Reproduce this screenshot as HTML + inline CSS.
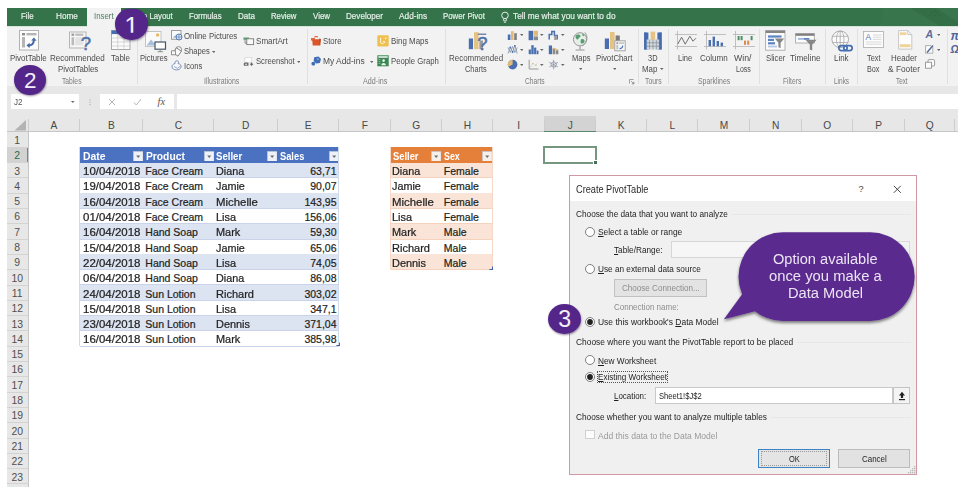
<!DOCTYPE html>
<html lang="en"><head><meta charset="utf-8"><title>Excel - Create PivotTable</title>
<style>
*{box-sizing:border-box;margin:0;padding:0}
html,body{width:962px;height:487px;overflow:hidden;background:#fff}
body{font-family:"Liberation Sans",sans-serif;color:#444;position:relative}
#app{position:absolute;left:0;top:0;width:962px;height:487px;overflow:hidden;background:#fff}
.a{position:absolute}
.t{position:absolute;white-space:pre;line-height:1;transform-origin:0 50%}
u{text-decoration:underline;text-underline-offset:1px;text-decoration-thickness:0.8px}

</style></head>
<body>
<div id="app">
<div class="a" style="left:7px;top:8px;width:951.00px;height:18.00px;background:#35734a;"></div>
<div class="a" style="left:7px;top:25.7px;width:951.00px;height:1.30px;background:#d5e4da;"></div>
<svg class="a" style="left:880px;top:8px" width="78" height="18" viewBox="0 0 78 18"><path d="M3 0h75v18H0z" fill="#3b774f" opacity=".55"/><path d="M30 0h26L78 14v4H60z" fill="#2e6842" opacity=".5"/></svg>
<div class="a" style="left:87px;top:8px;width:34.30px;height:19.00px;background:#f2f2f2;"></div>
<div class="t" style="left:20.60px;top:10.81px;font-size:9.8px;color:#e9f1eb;transform:scaleX(0.804);-webkit-text-stroke:0.200px #e9f1eb;">File</div>
<div class="t" style="left:55.80px;top:10.81px;font-size:9.8px;color:#e9f1eb;transform:scaleX(0.838);-webkit-text-stroke:0.200px #e9f1eb;">Home</div>
<div class="t" style="left:142.50px;top:10.81px;font-size:9.8px;color:#e9f1eb;transform:scaleX(0.790);-webkit-text-stroke:0.200px #e9f1eb;">e Layout</div>
<div class="t" style="left:188.70px;top:10.81px;font-size:9.8px;color:#e9f1eb;transform:scaleX(0.798);-webkit-text-stroke:0.200px #e9f1eb;">Formulas</div>
<div class="t" style="left:237.50px;top:10.81px;font-size:9.8px;color:#e9f1eb;transform:scaleX(0.821);-webkit-text-stroke:0.200px #e9f1eb;">Data</div>
<div class="t" style="left:270.80px;top:10.81px;font-size:9.8px;color:#e9f1eb;transform:scaleX(0.791);-webkit-text-stroke:0.200px #e9f1eb;">Review</div>
<div class="t" style="left:312.50px;top:10.81px;font-size:9.8px;color:#e9f1eb;transform:scaleX(0.807);-webkit-text-stroke:0.200px #e9f1eb;">View</div>
<div class="t" style="left:345.50px;top:10.81px;font-size:9.8px;color:#e9f1eb;transform:scaleX(0.826);-webkit-text-stroke:0.200px #e9f1eb;">Developer</div>
<div class="t" style="left:399.20px;top:10.81px;font-size:9.8px;color:#e9f1eb;transform:scaleX(0.846);-webkit-text-stroke:0.200px #e9f1eb;">Add-ins</div>
<div class="t" style="left:443.20px;top:10.81px;font-size:9.8px;color:#e9f1eb;transform:scaleX(0.800);-webkit-text-stroke:0.200px #e9f1eb;">Power Pivot</div>
<div class="t" style="left:512.50px;top:10.81px;font-size:9.8px;color:#e9f1eb;transform:scaleX(0.848);-webkit-text-stroke:0.200px #e9f1eb;">Tell me what you want to do</div>
<div class="t" style="left:93.60px;top:10.81px;font-size:9.8px;color:#4a7f5e;transform:scaleX(0.799);">Insert</div>
<svg class="a" style="left:499.2px;top:9.8px;" width="12" height="14" viewBox="0 0 12 14"><circle cx="6" cy="5.4" r="3.3" fill="none" stroke="#e4eee7" stroke-width="1"/><path d="M4.7 8.6v2.3h2.6V8.6M4.9 12.2h2.2" fill="none" stroke="#e4eee7" stroke-width="0.9"/></svg>
<svg class="a" style="left:928px;top:10px;" width="14" height="8" viewBox="0 0 14 8"><g fill="#2a5c3a"><circle cx="2" cy="5" r=".6"/><circle cx="4.5" cy="2.5" r=".6"/><circle cx="7" cy="5" r=".6"/><circle cx="9.5" cy="2.5" r=".6"/><circle cx="12" cy="5" r=".6"/><circle cx="7" cy="1" r=".6"/></g></svg>
<div class="a" style="left:7px;top:26.5px;width:951.00px;height:59.50px;background:#f2f2f2;"></div>
<div class="a" style="left:86.5px;top:24px;width:34.50px;height:4.00px;background:#f2f2f2;"></div>
<div class="a" style="left:7px;top:86px;width:951.00px;height:30.00px;background:#e7e7e7;"></div>
<div class="a" style="left:137px;top:29px;width:1.00px;height:55.00px;background:#e0e0e0;"></div>
<div class="a" style="left:307px;top:29px;width:1.00px;height:55.00px;background:#e0e0e0;"></div>
<div class="a" style="left:445px;top:29px;width:1.00px;height:55.00px;background:#e0e0e0;"></div>
<div class="a" style="left:637.5px;top:29px;width:1.00px;height:55.00px;background:#e0e0e0;"></div>
<div class="a" style="left:668px;top:29px;width:1.00px;height:55.00px;background:#e0e0e0;"></div>
<div class="a" style="left:758.8px;top:29px;width:1.00px;height:55.00px;background:#e0e0e0;"></div>
<div class="a" style="left:825px;top:29px;width:1.00px;height:55.00px;background:#e0e0e0;"></div>
<div class="a" style="left:857.3px;top:29px;width:1.00px;height:55.00px;background:#e0e0e0;"></div>
<div class="a" style="left:946.5px;top:29px;width:1.00px;height:55.00px;background:#e0e0e0;"></div>
<div class="t" style="left:62.00px;top:76.90px;font-size:8.6px;color:#7b7b7b;transform:scaleX(0.785);">Tables</div>
<div class="t" style="left:203.70px;top:76.90px;font-size:8.6px;color:#7b7b7b;transform:scaleX(0.812);">Illustrations</div>
<div class="t" style="left:363.20px;top:76.90px;font-size:8.6px;color:#7b7b7b;transform:scaleX(0.834);">Add-ins</div>
<div class="t" style="left:525.40px;top:76.90px;font-size:8.6px;color:#7b7b7b;transform:scaleX(0.774);">Charts</div>
<div class="t" style="left:645.00px;top:76.90px;font-size:8.6px;color:#7b7b7b;transform:scaleX(0.799);">Tours</div>
<div class="t" style="left:697.50px;top:76.90px;font-size:8.6px;color:#7b7b7b;transform:scaleX(0.802);">Sparklines</div>
<div class="t" style="left:783.00px;top:76.90px;font-size:8.6px;color:#7b7b7b;transform:scaleX(0.782);">Filters</div>
<div class="t" style="left:833.70px;top:76.90px;font-size:8.6px;color:#7b7b7b;transform:scaleX(0.753);">Links</div>
<div class="t" style="left:895.60px;top:76.90px;font-size:8.6px;color:#7b7b7b;transform:scaleX(0.736);">Text</div>
<div class="t" style="left:10.30px;top:52.96px;font-size:9.7px;color:#4c4c4c;transform:scaleX(0.821);">PivotTable</div>
<div class="t" style="left:50.30px;top:52.96px;font-size:9.7px;color:#4c4c4c;transform:scaleX(0.833);">Recommended</div>
<div class="t" style="left:58.00px;top:63.96px;font-size:9.7px;color:#4c4c4c;transform:scaleX(0.813);">PivotTables</div>
<div class="t" style="left:111.00px;top:52.96px;font-size:9.7px;color:#4c4c4c;transform:scaleX(0.820);">Table</div>
<div class="t" style="left:140.30px;top:52.96px;font-size:9.7px;color:#4c4c4c;transform:scaleX(0.791);">Pictures</div>
<div class="t" style="left:448.60px;top:52.96px;font-size:9.7px;color:#4c4c4c;transform:scaleX(0.823);">Recommended</div>
<div class="t" style="left:465.00px;top:63.76px;font-size:9.7px;color:#4c4c4c;transform:scaleX(0.760);">Charts</div>
<div class="t" style="left:571.50px;top:52.96px;font-size:9.7px;color:#4c4c4c;transform:scaleX(0.780);">Maps</div>
<div class="t" style="left:596.00px;top:52.96px;font-size:9.7px;color:#4c4c4c;transform:scaleX(0.807);">PivotChart</div>
<div class="t" style="left:648.00px;top:52.96px;font-size:9.7px;color:#4c4c4c;transform:scaleX(0.767);">3D</div>
<div class="t" style="left:642.40px;top:63.76px;font-size:9.7px;color:#4c4c4c;transform:scaleX(0.817);">Map</div>
<div class="t" style="left:677.80px;top:52.96px;font-size:9.7px;color:#4c4c4c;transform:scaleX(0.775);">Line</div>
<div class="t" style="left:700.00px;top:52.96px;font-size:9.7px;color:#4c4c4c;transform:scaleX(0.833);">Column</div>
<div class="t" style="left:734.00px;top:52.96px;font-size:9.7px;color:#4c4c4c;transform:scaleX(0.903);">Win/</div>
<div class="t" style="left:735.70px;top:63.76px;font-size:9.7px;color:#4c4c4c;transform:scaleX(0.723);">Loss</div>
<div class="t" style="left:765.70px;top:52.96px;font-size:9.7px;color:#4c4c4c;transform:scaleX(0.796);">Slicer</div>
<div class="t" style="left:790.40px;top:52.96px;font-size:9.7px;color:#4c4c4c;transform:scaleX(0.844);">Timeline</div>
<div class="t" style="left:834.00px;top:52.96px;font-size:9.7px;color:#4c4c4c;transform:scaleX(0.815);">Link</div>
<div class="t" style="left:866.50px;top:52.96px;font-size:9.7px;color:#4c4c4c;transform:scaleX(0.760);">Text</div>
<div class="t" style="left:866.50px;top:63.76px;font-size:9.7px;color:#4c4c4c;transform:scaleX(0.748);">Box</div>
<div class="t" style="left:891.00px;top:52.96px;font-size:9.7px;color:#4c4c4c;transform:scaleX(0.818);">Header</div>
<div class="t" style="left:888.00px;top:63.76px;font-size:9.7px;color:#4c4c4c;transform:scaleX(0.861);">&amp; Footer</div>
<div class="t" style="left:183.70px;top:30.76px;font-size:9.7px;color:#4c4c4c;transform:scaleX(0.811);">Online Pictures</div>
<div class="t" style="left:183.70px;top:45.96px;font-size:9.7px;color:#4c4c4c;transform:scaleX(0.782);">Shapes</div>
<div class="t" style="left:183.70px;top:61.16px;font-size:9.7px;color:#4c4c4c;transform:scaleX(0.790);">Icons</div>
<div class="t" style="left:255.70px;top:35.66px;font-size:9.7px;color:#4c4c4c;transform:scaleX(0.832);">SmartArt</div>
<div class="t" style="left:255.70px;top:56.46px;font-size:9.7px;color:#4c4c4c;transform:scaleX(0.790);">Screenshot</div>
<div class="t" style="left:323.00px;top:35.96px;font-size:9.7px;color:#4c4c4c;transform:scaleX(0.799);">Store</div>
<div class="t" style="left:323.00px;top:56.46px;font-size:9.7px;color:#4c4c4c;transform:scaleX(0.868);">My Add-ins</div>
<div class="t" style="left:390.50px;top:35.96px;font-size:9.7px;color:#4c4c4c;transform:scaleX(0.819);">Bing Maps</div>
<div class="t" style="left:390.50px;top:56.46px;font-size:9.7px;color:#4c4c4c;transform:scaleX(0.800);">People Graph</div>
<svg class="a" style="left:211.80px;top:50.50px" width="3.6" height="2" viewBox="0 0 3.6 2"><path d="M0 0H3.6L1.8 2Z" fill="#666"/></svg>
<svg class="a" style="left:296.80px;top:61.00px" width="3.6" height="2" viewBox="0 0 3.6 2"><path d="M0 0H3.6L1.8 2Z" fill="#666"/></svg>
<svg class="a" style="left:369.80px;top:61.00px" width="3.6" height="2" viewBox="0 0 3.6 2"><path d="M0 0H3.6L1.8 2Z" fill="#666"/></svg>
<svg class="a" style="left:578.90px;top:68.00px" width="3.6" height="2" viewBox="0 0 3.6 2"><path d="M0 0H3.6L1.8 2Z" fill="#666"/></svg>
<svg class="a" style="left:612.60px;top:68.00px" width="3.6" height="2" viewBox="0 0 3.6 2"><path d="M0 0H3.6L1.8 2Z" fill="#666"/></svg>
<svg class="a" style="left:660.20px;top:68.30px" width="3.6" height="2" viewBox="0 0 3.6 2"><path d="M0 0H3.6L1.8 2Z" fill="#666"/></svg>
<svg class="a" style="left:519.70px;top:34.00px" width="3.6" height="2" viewBox="0 0 3.6 2"><path d="M0 0H3.6L1.8 2Z" fill="#666"/></svg>
<svg class="a" style="left:540.20px;top:34.00px" width="3.6" height="2" viewBox="0 0 3.6 2"><path d="M0 0H3.6L1.8 2Z" fill="#666"/></svg>
<svg class="a" style="left:561.20px;top:34.00px" width="3.6" height="2" viewBox="0 0 3.6 2"><path d="M0 0H3.6L1.8 2Z" fill="#666"/></svg>
<svg class="a" style="left:519.70px;top:48.50px" width="3.6" height="2" viewBox="0 0 3.6 2"><path d="M0 0H3.6L1.8 2Z" fill="#666"/></svg>
<svg class="a" style="left:540.20px;top:48.50px" width="3.6" height="2" viewBox="0 0 3.6 2"><path d="M0 0H3.6L1.8 2Z" fill="#666"/></svg>
<svg class="a" style="left:561.20px;top:48.50px" width="3.6" height="2" viewBox="0 0 3.6 2"><path d="M0 0H3.6L1.8 2Z" fill="#666"/></svg>
<svg class="a" style="left:519.70px;top:63.50px" width="3.6" height="2" viewBox="0 0 3.6 2"><path d="M0 0H3.6L1.8 2Z" fill="#666"/></svg>
<svg class="a" style="left:540.20px;top:63.50px" width="3.6" height="2" viewBox="0 0 3.6 2"><path d="M0 0H3.6L1.8 2Z" fill="#666"/></svg>
<svg class="a" style="left:561.20px;top:63.50px" width="3.6" height="2" viewBox="0 0 3.6 2"><path d="M0 0H3.6L1.8 2Z" fill="#666"/></svg>
<svg class="a" style="left:936.60px;top:33.50px" width="3.6" height="2" viewBox="0 0 3.6 2"><path d="M0 0H3.6L1.8 2Z" fill="#666"/></svg>
<svg class="a" style="left:936.60px;top:48.50px" width="3.6" height="2" viewBox="0 0 3.6 2"><path d="M0 0H3.6L1.8 2Z" fill="#666"/></svg>
<svg class="a" style="left:19px;top:30px;" width="21" height="21" viewBox="0 0 21 21"><rect x=".5" y=".5" width="19" height="19.500" fill="#fcfcfc" stroke="#b2b2b2"/><rect x="3" y="3" width="3" height="2.4" fill="#8d8d8d"/><rect x="7.5" y="3" width="10" height="2.4" fill="#b5b5b5"/><rect x="3" y="7" width="3" height="10.5" fill="#b5b5b5"/><path d="M9.5 15.5c3.5 0 5.2-1.8 5.4-5.5" fill="none" stroke="#456aa9" stroke-width="2"/><path d="M12.2 10.6l2.8-3 2.6 3.2zM10.6 12.7l-3.2 2.8 3.3 2.6z" fill="#456aa9"/></svg>
<svg class="a" style="left:69px;top:31px;" width="22" height="22" viewBox="0 0 22 22"><rect x=".5" y="1" width="16.500" height="16" fill="#f6f6f6" stroke="#b5b5b5"/><rect x="2.5" y="2.6" width="2.6" height="2.2" fill="#999"/><rect x="6.3" y="2.6" width="8" height="2.2" fill="#bbb"/><rect x="2.5" y="6.2" width="2.6" height="8" fill="#bbb"/><rect x="6.3" y="6.2" width="8" height="8" fill="#e3e3e3"/></svg>
<div class="t" style="left:80.80px;top:35.26px;font-size:18.5px;color:#5172a8;-webkit-text-stroke:0.500px #5172a8;">?</div>
<svg class="a" style="left:110.5px;top:30px;" width="20" height="21" viewBox="0 0 20 21"><rect x=".5" y=".5" width="18.5" height="19" fill="#fbfbfb" stroke="#a8a8a8"/><rect x=".5" y=".5" width="18.5" height="3.6" fill="#4a6fb0"/><path d="M.5 8h18.5M.5 12h18.5M.5 16h18.5M6.7 4v15.5M12.9 4v15.5" stroke="#c9c9c9" stroke-width=".7" fill="none"/></svg>
<svg class="a" style="left:145px;top:30.5px;" width="22" height="22" viewBox="0 0 22 22"><rect x=".5" y=".5" width="15.5" height="15" fill="#fafafa" stroke="#c4c4c4"/><path d="M1.5 14.5l4.5-6 3.4 4 2-2 3.6 4z" fill="#a9bfdc"/><circle cx="12.6" cy="4" r="1.7" fill="#eab765"/><rect x="10" y="11" width="10.5" height="7.2" fill="#fdfdfd" stroke="#46556b" stroke-width="1.2"/><path d="M15.2 18.4v2M12.6 20.7h5.3" stroke="#8b8b8b" stroke-width="1"/></svg>
<svg class="a" style="left:171px;top:29.5px;" width="12" height="11" viewBox="0 0 12 11"><rect x=".5" y=".5" width="9.5" height="8.8" fill="#fafafa" stroke="#9b9b9b"/><path d="M1.5 8.5l2.7-3.6 2 2.4z" fill="#a9bfdc"/><circle cx="8" cy="7" r="3" fill="#dfe8f3" stroke="#4a73b4" stroke-width=".9"/><path d="M5 7h6M8 4v6" stroke="#4a73b4" stroke-width=".6"/></svg>
<svg class="a" style="left:171px;top:46px;" width="12" height="11" viewBox="0 0 12 11"><circle cx="7.6" cy="3.6" r="3" fill="#f7f7f7" stroke="#7e7e7e" stroke-width=".9"/><rect x="3.2" y="3" width="6" height="6" transform="rotate(35 6.2 6)" fill="#f9f9f9" stroke="#7e7e7e" stroke-width=".9"/><rect x=".6" y="4.8" width="4" height="4" fill="#f7f7f7" stroke="#7e7e7e" stroke-width=".8"/></svg>
<svg class="a" style="left:171px;top:60px;" width="12" height="11" viewBox="0 0 12 11"><path d="M4.200 3.400c-.8-1.600.6-2.900 2-2.600 1.500.3 1.800 1.900.9 2.800 1.900.2 3.200 1.500 3 3.200-.3 2.200-2.600 3.200-4.800 3.100-2.300-.1-4.200-1.200-4.300-3.100-.1-1.500 1.100-2.800 3.200-3.400z" fill="#f6f8fb" stroke="#7187ad" stroke-width=".9"/><path d="M3 6.500l3.600 1.800 3-2.400" fill="none" stroke="#7187ad" stroke-width=".7"/></svg>
<svg class="a" style="left:243px;top:36px;" width="12" height="10" viewBox="0 0 12 10"><path d="M.5 1.500h5.500v2.300H.500z" fill="#5b9a6c"/><path d="M2 3.800v3.400h2" stroke="#777" stroke-width=".8" fill="none"/><rect x="3.800" y="2.800" width="6.800" height="5.800" fill="#fafafa" stroke="#7b7b7b" stroke-width=".9"/></svg>
<svg class="a" style="left:243px;top:56.5px;" width="12" height="10" viewBox="0 0 12 10"><rect x="1.800" y=".5" width="7" height="5" fill="#fbfbfb" stroke="#d3d3d3" stroke-width=".7"/><path d="M.8 8.800V6.300l1-.9h2.700l1 .9v2.500z" fill="#6c6c6c"/><circle cx="3.100" cy="7.300" r=".9" fill="#ddd"/><path d="M7 7.200h3.200M8.600 5.600v3.200" stroke="#5a5a5a" stroke-width="1"/></svg>
<svg class="a" style="left:311px;top:36px;" width="10.5" height="10.5" viewBox="0 0 10.5 10.5"><path d="M1.200 3.200h7.800l-.5 6.300H1.700z" fill="#d9572b"/><path d="M.3 2.600h3.400l-.3 1.600H.5zM3.200 1.200c.8-1.400 3-1.400 3.800 0" fill="#e2703f" stroke="#d9572b" stroke-width=".9"/><path d="M8.200 2.500l1.800.6-.7 6.400-1.200-.2z" fill="#c24a22"/></svg>
<svg class="a" style="left:311px;top:56.2px;" width="10.5" height="10" viewBox="0 0 10.5 10"><path d="M3.200 1.200l4.300-.7 2.500 2.500-1.200 4-3.800.6-2.300-2.500z" fill="#3f6cb4"/><circle cx="2.300" cy="7.700" r="1.900" fill="#3f6cb4"/><circle cx="6.800" cy="3.200" r="1.100" fill="#7d9fd4"/></svg>
<svg class="a" style="left:377px;top:34.5px;" width="12" height="12" viewBox="0 0 12 12"><rect x=".3" y=".3" width="11.400" height="11.200" rx="1.200" fill="#efc050"/><path d="M3.600 2.800v5l1.700 1 2.800-1.700-2-.9" fill="none" stroke="#fff7df" stroke-width="1"/><circle cx="8.600" cy="3.400" r=".8" fill="#fff7df"/></svg>
<svg class="a" style="left:377px;top:55.3px;" width="12" height="11.6" viewBox="0 0 12 11.6"><rect x=".3" y=".3" width="11.400" height="11" fill="#3b8654"/><rect x="1.300" y="1.200" width="9.400" height="1.600" fill="#e6f1e9"/><circle cx="6.600" cy="5.600" r="1.300" fill="#eef6f0"/><path d="M4.300 10.300c0-3.200 4.600-3.200 4.600 0z" fill="#eef6f0"/><path d="M1.600 4.500h1.700M1.600 6.500h1.700M1.600 8.500h1.700" stroke="#9cc7aa" stroke-width=".8"/></svg>
<svg class="a" style="left:467.5px;top:30.5px;" width="21" height="21" viewBox="0 0 21 21"><rect x=".8" y="7.500" width="4.200" height="10.700" fill="#4a6fb0"/><rect x="6" y="1.200" width="4.600" height="17" fill="#e4c384"/><rect x="11.400" y="9.500" width="3.600" height="8.700" fill="#9a9a9a"/><path d="M9.800 3.200h8.400" stroke="#5a6f94" stroke-width="1.200"/></svg>
<div class="t" style="left:477.30px;top:35.06px;font-size:18.5px;color:#5172a8;-webkit-text-stroke:0.500px #5172a8;">?</div>
<svg class="a" style="left:507px;top:29.5px;" width="11.5" height="11" viewBox="0 0 11.5 11"><rect x=".8" y="4.500" width="2.600" height="5.500" fill="#4a6fb0"/><rect x="4" y="1.200" width="2.600" height="8.800" fill="#e0bb78"/><rect x="7.200" y="3.200" width="2.600" height="6.800" fill="#7f7f7f"/></svg>
<svg class="a" style="left:528px;top:29.5px;" width="11.5" height="11" viewBox="0 0 11.5 11"><rect x=".6" y=".8" width="4.600" height="9.400" fill="#4a6fb0"/><rect x="5.800" y=".8" width="4.200" height="5" fill="#e0bb78"/><rect x="5.800" y="6.400" width="4.200" height="3.800" fill="#8b8b8b"/></svg>
<svg class="a" style="left:548px;top:29.5px;" width="11.5" height="11" viewBox="0 0 11.5 11"><path d="M1.200 9.500V4.500h2.600V1.500h2.600v4h2.800v4" fill="none" stroke="#4a6fb0" stroke-width="1.500"/><rect x="6.200" y="5.500" width="2.400" height="4.500" fill="#9a9a9a"/></svg>
<svg class="a" style="left:507px;top:44px;" width="11.5" height="11" viewBox="0 0 11.5 11"><path d="M1 9.500l2.300-6 2.300 4.500 2.300-6.500 2.300 8M1 3.500l2.300 5 2.300-6 2.300 6 2.300-5" fill="none" stroke="#7f8fa8" stroke-width=".8"/><g fill="#4a6fb0"><circle cx="3.300" cy="3.500" r=".9"/><circle cx="7.900" cy="1.800" r=".9"/><circle cx="5.600" cy="8" r=".9"/></g></svg>
<svg class="a" style="left:528px;top:44px;" width="11.5" height="11" viewBox="0 0 11.5 11"><rect x=".7" y="5.500" width="2.200" height="4.700" fill="#4a6fb0"/><rect x="3.300" y="1.200" width="2.400" height="9" fill="#4a6fb0"/><rect x="6.100" y="3.600" width="2.200" height="6.600" fill="#4a6fb0"/><rect x="8.700" y="6.600" width="1.800" height="3.600" fill="#4a6fb0"/></svg>
<svg class="a" style="left:548px;top:44px;" width="11.5" height="11" viewBox="0 0 11.5 11"><rect x=".8" y="1.500" width="3.200" height="8.700" fill="#4a6fb0"/><path d="M4.600 4.200h2.600v6h-2.600zM7.800 6.200h2.600v4H7.800z" fill="#8b8b8b"/><path d="M4.600 4l5.800 2" stroke="#e0bb78" stroke-width="1.200"/></svg>
<svg class="a" style="left:507px;top:58.5px;" width="11.5" height="11" viewBox="0 0 11.5 11"><circle cx="5.600" cy="5.600" r="4.800" fill="#4a6fb0"/><path d="M5.600 5.600V.8A4.800 4.800 0 0 0 1.300 7.700z" fill="#e0bb78"/></svg>
<svg class="a" style="left:528px;top:58.5px;" width="11.5" height="11" viewBox="0 0 11.5 11"><path d="M1.200 .8v9.200h9.300" fill="none" stroke="#8f8f8f" stroke-width=".9"/><path d="M2.600 8l2.200-3.500 2 2 2.600-2.300" fill="none" stroke="#b8c6dd" stroke-width=".9" stroke-dasharray="1.200 .8"/><g fill="#e0bb78"><circle cx="4.800" cy="4.500" r=".8"/><circle cx="8" cy="6" r=".8"/></g></svg>
<svg class="a" style="left:548px;top:58.5px;" width="11.5" height="11" viewBox="0 0 11.5 11"><path d="M5.600 .8v9.600M1.200 3.200l8.800 4.800M10 3.200L1.200 8" stroke="#9c9c9c" stroke-width=".8"/><path d="M5.600 2.500l3 2.200-1.200 3.300-3.600-.4-1-3z" fill="none" stroke="#7d93b9" stroke-width=".8"/></svg>
<svg class="a" style="left:571.5px;top:30.5px;" width="17" height="21" viewBox="0 0 17 21"><circle cx="8" cy="8.300" r="6.600" fill="#e4efe8" stroke="#979797" stroke-width="1"/><path d="M3.600 4.600c1.800-1.400 4-1.400 5 .4-.4 1.800-2.200 1.600-2.600 3.600-1.600.2-3-1.800-2.400-4zM9 8.400c1.600-.8 3.600 0 3.600 2-.4 1.500-2 2.400-3.400 2-.8-1.200-.8-2.800-.2-4zM10 2.800c1.200 0 2.200.8 2.600 1.800l-1.800.6z" fill="#5a9d70"/><path d="M12.800 1.300c3.400 3.800 2.800 10.200-2.400 13.400" fill="none" stroke="#979797" stroke-width="1"/><path d="M8 15.200v3M3.600 19h9" stroke="#979797" stroke-width="1.200"/></svg>
<svg class="a" style="left:604px;top:30.5px;" width="23" height="21" viewBox="0 0 23 21"><rect x=".8" y="7.500" width="4.200" height="10.500" fill="#4a6fb0"/><rect x="6" y="1" width="4.600" height="17" fill="#e4c384"/><rect x="11.600" y="4.500" width="4.200" height="6" fill="#7b7b7b"/><rect x="10.800" y="9.800" width="10.400" height="10" fill="#f7f7f7" stroke="#9d9d9d" stroke-width=".9"/><rect x="12.300" y="11.300" width="2" height="1.600" fill="#999"/><rect x="15" y="11.300" width="5" height="1.600" fill="#c2c2c2"/><rect x="12.300" y="13.800" width="2" height="4.600" fill="#c2c2c2"/><path d="M15.600 17.600c2 0 3-1 3.200-3" fill="none" stroke="#4a6fb0" stroke-width="1.100"/></svg>
<svg class="a" style="left:643px;top:30.5px;" width="21" height="20" viewBox="0 0 21 20"><rect x="1.200" y="1.500" width="4.200" height="17" fill="#456aae"/><rect x="7.600" y=".6" width="4.600" height="9" fill="#e4c384"/><rect x="14.400" y="1.500" width="4.200" height="17" fill="#456aae"/><path d="M3.400 8.500h13v10h-13z" fill="#d5dbdd" opacity=".9"/><path d="M3.400 11.800h13M3.400 15.200h13M6.600 8.500v10M10 8.500v10M13.300 8.500v10" stroke="#7c8894" stroke-width=".7"/><rect x="1.200" y="1.500" width="2.200" height="17" fill="#456aae"/><rect x="16.400" y="1.500" width="2.200" height="17" fill="#456aae"/></svg>
<svg class="a" style="left:674.5px;top:31px;" width="23" height="19" viewBox="0 0 23 19"><path d="M2.500 0v18.500M0 3.500h22M0 15.500h22" stroke="#b9b9b9" stroke-width=".9"/><path d="M2.800 13l3.800-6.800 3.600 7 4.600-8 3.200 5 3-3" fill="none" stroke="#6f6f6f" stroke-width="1"/></svg>
<svg class="a" style="left:704px;top:31px;" width="22" height="19" viewBox="0 0 22 19"><path d="M2.500 0v18.500M0 3.500h22M0 15.500h22" stroke="#b9b9b9" stroke-width=".9"/><g fill="#4a6fb0"><rect x="4.600" y="9" width="2.400" height="6.200"/><rect x="8.600" y="5.600" width="2.400" height="9.600"/><rect x="12.600" y="10" width="2.400" height="5.200"/><rect x="16.600" y="11.600" width="2.400" height="3.600"/></g></svg>
<svg class="a" style="left:732.5px;top:31px;" width="22" height="19" viewBox="0 0 22 19"><path d="M2.500 0v18.500M0 3.500h22M0 15.500h22" stroke="#b9b9b9" stroke-width=".9"/><g fill="#4f8f66"><rect x="4.600" y="5" width="2" height="4.200"/><rect x="7.600" y="5" width="2" height="4.200"/><rect x="17.600" y="5" width="2" height="4.200"/></g><g fill="#d98a4e"><rect x="11" y="9.600" width="2" height="4.200"/><rect x="14.200" y="9.600" width="2" height="4.200"/></g></svg>
<svg class="a" style="left:765px;top:29.8px;" width="21" height="21" viewBox="0 0 21 21"><rect x=".6" y=".6" width="19.400" height="19.600" fill="#fbfbfb" stroke="#a9a9a9" stroke-width=".9"/><rect x=".6" y=".6" width="19.400" height="2.400" fill="#858585"/><rect x="3" y="5.400" width="13.500" height="2.200" fill="#5d84c2"/><rect x="3" y="8.800" width="6" height="2.200" fill="#5d84c2"/><rect x="3" y="12.200" width="7" height="2.200" fill="#5d84c2"/><rect x="3" y="15.600" width="9" height="1.800" fill="#b9c9e4"/><path d="M9.800 8.600h9.400l-3.600 4.200v5.200l-2.200-.8v-4.400z" fill="#868686"/></svg>
<svg class="a" style="left:795px;top:32.8px;" width="23" height="19" viewBox="0 0 23 19"><rect x=".6" y=".6" width="18.800" height="9.400" fill="#fbfbfb" stroke="#a9a9a9" stroke-width=".9"/><rect x=".6" y=".6" width="18.800" height="2.200" fill="#7e7e7e"/><rect x="3" y="5" width="5" height="1.800" fill="#9fb6dc"/><rect x="8.400" y="5" width="6" height="1.800" fill="#5d84c2"/><path d="M10.400 6.800h11.200l-4.400 4.800v6l-2.400-1v-5z" fill="#868686"/></svg>
<svg class="a" style="left:831px;top:29.6px;" width="23" height="23" viewBox="0 0 23 23"><circle cx="9.200" cy="9.300" r="8.300" fill="#fbfbfb" stroke="#a2a2a2" stroke-width=".9"/><ellipse cx="9.200" cy="9.300" rx="3.800" ry="8.300" fill="none" stroke="#a8a8a8" stroke-width=".8"/><path d="M1.500 6.300h15.400M1.500 12.500h15.400M9.200 1v16.600" stroke="#a8a8a8" stroke-width=".8"/><rect x="7.800" y="15.600" width="8.400" height="5" rx="2.500" fill="none" stroke="#456fb3" stroke-width="1.700"/><rect x="12.800" y="15.600" width="8.400" height="5" rx="2.500" fill="none" stroke="#456fb3" stroke-width="1.700"/></svg>
<svg class="a" style="left:863px;top:31.2px;" width="22" height="17.5" viewBox="0 0 22 17.5"><rect x=".5" y=".5" width="20" height="16" fill="#fcfcfc" stroke="#b4b4b4" stroke-width=".9"/><path d="M10 4h8.500M10 6.200h8.500M10 8.400h8.500M3 11h15.500M3 13.200h15.500" stroke="#d6d6d6" stroke-width=".9"/></svg>
<div class="t" style="left:865.60px;top:33.20px;font-size:8.4px;color:#5877b0;">A</div>
<svg class="a" style="left:898px;top:30.2px;" width="15" height="20" viewBox="0 0 15 20"><path d="M.6 .6h9.200l4 4v14.500H.6z" fill="#fdfdfd" stroke="#c2c2c2" stroke-width=".9"/><path d="M9.800 .6v4h4" fill="none" stroke="#c2c2c2" stroke-width=".9"/><rect x="1.800" y="2.300" width="6.600" height="2.800" fill="#efd39b"/><rect x="1.800" y="14.200" width="10.800" height="3" fill="#efd39b"/></svg>
<div class="t" style="left:925.60px;top:29.12px;font-size:10.6px;color:#586d9c;font-weight:700;font-style:italic;">A</div>
<svg class="a" style="left:925px;top:44.5px;" width="10" height="9" viewBox="0 0 10 9"><path d="M.6 .6h5.200l2 2v5.600H.6z" fill="#fbfbfb" stroke="#9a9a9a" stroke-width=".8"/><path d="M2 7.600l6-7" stroke="#566c9c" stroke-width="1.500"/></svg>
<svg class="a" style="left:924.5px;top:59.3px;" width="11" height="10.5" viewBox="0 0 11 10.5"><rect x="3" y=".6" width="6.600" height="6.400" rx="1" fill="#fbfbfb" stroke="#858585" stroke-width=".8"/><rect x=".6" y="3.200" width="5.800" height="6" fill="#fbfbfb" stroke="#858585" stroke-width=".8"/></svg>
<div class="t" style="left:950.60px;top:29.64px;font-size:12px;color:#4d669e;font-weight:700;font-style:italic;">π</div>
<div class="t" style="left:950.40px;top:43.87px;font-size:10.5px;color:#4d669e;font-weight:700;font-style:italic;">Ω</div>
<div class="a" style="left:958px;top:8px;width:4.00px;height:112.00px;background:#fff;"></div>
<svg class="a" style="left:629px;top:79px;" width="6" height="6" viewBox="0 0 6 6"><path d="M.5 4.500V.5h4" fill="none" stroke="#8a8a8a" stroke-width=".8"/><path d="M2.200 2.200l2.600 2.600M4.900 2.800v2.100H2.800" fill="none" stroke="#7a7a7a" stroke-width=".8"/></svg>
<div class="a" style="left:10.7px;top:93.8px;width:67.90px;height:14.90px;background:#fff;"></div>
<div class="t" style="left:14.00px;top:98.31px;font-size:9.2px;color:#555;transform:scaleX(0.875);">J2</div>
<svg class="a" style="left:71.20px;top:101.20px" width="3.6" height="2" viewBox="0 0 3.6 2"><path d="M0 0H3.6L1.8 2Z" fill="#6a6a6a"/></svg>
<svg class="a" style="left:89px;top:98.5px;" width="2" height="7" viewBox="0 0 2 7"><g fill="#9a9a9a"><circle cx="1" cy="1" r=".55"/><circle cx="1" cy="3.300" r=".55"/><circle cx="1" cy="5.600" r=".55"/></g></svg>
<div class="a" style="left:99.5px;top:93.8px;width:74.50px;height:14.90px;background:#fff;"></div>
<svg class="a" style="left:107.8px;top:97.6px;" width="8" height="8" viewBox="0 0 8 8"><path d="M1 1l6 6M7 1l-6 6" stroke="#b5b5b5" stroke-width="1"/></svg>
<svg class="a" style="left:132.5px;top:97.6px;" width="9" height="8" viewBox="0 0 9 8"><path d="M1 4.500l2.300 2.500L8 1" fill="none" stroke="#b5b5b5" stroke-width="1"/></svg>
<div class="t" style="left:157.50px;top:97.22px;font-size:10.4px;color:#555;font-style:italic;font-family:&quot;Liberation Serif&quot;,serif;">fx</div>
<div class="a" style="left:176.8px;top:93.8px;width:781.20px;height:14.90px;background:#fff;"></div>
<div class="a" style="left:7px;top:116px;width:951.00px;height:16.00px;background:#e7e7e7;"></div>
<div class="a" style="left:7px;top:131.0px;width:951.00px;height:1.00px;background:#c6c6c6;"></div>
<div class="a" style="left:544px;top:116.4px;width:52.00px;height:15.60px;background:#d3d3d3;"></div>
<div class="a" style="left:544px;top:130.6px;width:52.00px;height:1.40px;background:#5a8a6c;"></div>
<div class="t" style="left:50.60px;top:121.12px;font-size:10.2px;color:#484848;">A</div>
<div class="a" style="left:79.2px;top:118.5px;width:1.00px;height:12.50px;background:#cdcdcd;"></div>
<div class="t" style="left:108.10px;top:121.12px;font-size:10.2px;color:#484848;">B</div>
<div class="a" style="left:142.2px;top:118.5px;width:1.00px;height:12.50px;background:#cdcdcd;"></div>
<div class="t" style="left:174.82px;top:121.12px;font-size:10.2px;color:#484848;">C</div>
<div class="a" style="left:213.2px;top:118.5px;width:1.00px;height:12.50px;background:#cdcdcd;"></div>
<div class="t" style="left:242.07px;top:121.12px;font-size:10.2px;color:#484848;">D</div>
<div class="a" style="left:276.7px;top:118.5px;width:1.00px;height:12.50px;background:#cdcdcd;"></div>
<div class="t" style="left:304.85px;top:121.12px;font-size:10.2px;color:#484848;">E</div>
<div class="a" style="left:338.2px;top:118.5px;width:1.00px;height:12.50px;background:#cdcdcd;"></div>
<div class="t" style="left:361.63px;top:121.12px;font-size:10.2px;color:#484848;">F</div>
<div class="a" style="left:389.7px;top:118.5px;width:1.00px;height:12.50px;background:#cdcdcd;"></div>
<div class="t" style="left:412.28px;top:121.12px;font-size:10.2px;color:#484848;">G</div>
<div class="a" style="left:441.2px;top:118.5px;width:1.00px;height:12.50px;background:#cdcdcd;"></div>
<div class="t" style="left:463.82px;top:121.12px;font-size:10.2px;color:#484848;">H</div>
<div class="a" style="left:492.2px;top:118.5px;width:1.00px;height:12.50px;background:#cdcdcd;"></div>
<div class="t" style="left:517.33px;top:121.12px;font-size:10.2px;color:#484848;">I</div>
<div class="a" style="left:543.7px;top:118.5px;width:1.00px;height:12.50px;background:#cdcdcd;"></div>
<div class="t" style="left:567.70px;top:121.12px;font-size:10.2px;color:#44524a;">J</div>
<div class="a" style="left:595.2px;top:118.5px;width:1.00px;height:12.50px;background:#cdcdcd;"></div>
<div class="t" style="left:617.85px;top:121.12px;font-size:10.2px;color:#484848;">K</div>
<div class="a" style="left:645.7px;top:118.5px;width:1.00px;height:12.50px;background:#cdcdcd;"></div>
<div class="t" style="left:669.41px;top:121.12px;font-size:10.2px;color:#484848;">L</div>
<div class="a" style="left:697.2px;top:118.5px;width:1.00px;height:12.50px;background:#cdcdcd;"></div>
<div class="t" style="left:719.75px;top:121.12px;font-size:10.2px;color:#484848;">M</div>
<div class="a" style="left:749.2px;top:118.5px;width:1.00px;height:12.50px;background:#cdcdcd;"></div>
<div class="t" style="left:772.07px;top:121.12px;font-size:10.2px;color:#484848;">N</div>
<div class="a" style="left:800.7px;top:118.5px;width:1.00px;height:12.50px;background:#cdcdcd;"></div>
<div class="t" style="left:823.28px;top:121.12px;font-size:10.2px;color:#484848;">O</div>
<div class="a" style="left:852.2px;top:118.5px;width:1.00px;height:12.50px;background:#cdcdcd;"></div>
<div class="t" style="left:875.35px;top:121.12px;font-size:10.2px;color:#484848;">P</div>
<div class="a" style="left:903.7px;top:118.5px;width:1.00px;height:12.50px;background:#cdcdcd;"></div>
<div class="t" style="left:925.78px;top:121.12px;font-size:10.2px;color:#484848;">Q</div>
<div class="a" style="left:954.2px;top:118.5px;width:1.00px;height:12.50px;background:#cdcdcd;"></div>
<div class="a" style="left:27.7px;top:118.5px;width:1.00px;height:12.50px;background:#cdcdcd;"></div>
<svg class="a" style="left:13px;top:118.5px;" width="14" height="12" viewBox="0 0 14 12"><path d="M13 1v10.500H1.500z" fill="#b3b3b3"/></svg>
<div class="a" style="left:7px;top:132.0px;width:21.30px;height:355.00px;background:#e7e7e7;"></div>
<div class="a" style="left:27.6px;top:132.0px;width:1.00px;height:355.00px;background:#c6c6c6;"></div>
<div class="a" style="left:7px;top:147.3px;width:21.00px;height:15.30px;background:#d2d2d2;"></div>
<div class="a" style="left:27.4px;top:147.3px;width:1.10px;height:15.30px;background:#5d9875;"></div>
<div class="t" style="left:14.36px;top:135.92px;font-size:10.4px;color:#4f4f4f;">1</div>
<div class="a" style="left:7px;top:146.8px;width:20.60px;height:0.80px;background:#d3d3d3;"></div>
<div class="t" style="left:14.36px;top:151.22px;font-size:10.4px;color:#2c6a44;">2</div>
<div class="a" style="left:7px;top:162.1px;width:20.60px;height:0.80px;background:#d3d3d3;"></div>
<div class="t" style="left:14.36px;top:166.52px;font-size:10.4px;color:#4f4f4f;">3</div>
<div class="a" style="left:7px;top:177.4px;width:20.60px;height:0.80px;background:#d3d3d3;"></div>
<div class="t" style="left:14.36px;top:181.82px;font-size:10.4px;color:#4f4f4f;">4</div>
<div class="a" style="left:7px;top:192.7px;width:20.60px;height:0.80px;background:#d3d3d3;"></div>
<div class="t" style="left:14.36px;top:197.12px;font-size:10.4px;color:#4f4f4f;">5</div>
<div class="a" style="left:7px;top:208.0px;width:20.60px;height:0.80px;background:#d3d3d3;"></div>
<div class="t" style="left:14.36px;top:212.42px;font-size:10.4px;color:#4f4f4f;">6</div>
<div class="a" style="left:7px;top:223.3px;width:20.60px;height:0.80px;background:#d3d3d3;"></div>
<div class="t" style="left:14.36px;top:227.72px;font-size:10.4px;color:#4f4f4f;">7</div>
<div class="a" style="left:7px;top:238.60000000000002px;width:20.60px;height:0.80px;background:#d3d3d3;"></div>
<div class="t" style="left:14.36px;top:243.02px;font-size:10.4px;color:#4f4f4f;">8</div>
<div class="a" style="left:7px;top:253.9px;width:20.60px;height:0.80px;background:#d3d3d3;"></div>
<div class="t" style="left:14.36px;top:258.32px;font-size:10.4px;color:#4f4f4f;">9</div>
<div class="a" style="left:7px;top:269.20000000000005px;width:20.60px;height:0.80px;background:#d3d3d3;"></div>
<div class="t" style="left:11.47px;top:273.62px;font-size:10.4px;color:#4f4f4f;">10</div>
<div class="a" style="left:7px;top:284.5px;width:20.60px;height:0.80px;background:#d3d3d3;"></div>
<div class="t" style="left:11.85px;top:288.92px;font-size:10.4px;color:#4f4f4f;">11</div>
<div class="a" style="left:7px;top:299.8px;width:20.60px;height:0.80px;background:#d3d3d3;"></div>
<div class="t" style="left:11.47px;top:304.22px;font-size:10.4px;color:#4f4f4f;">12</div>
<div class="a" style="left:7px;top:315.1px;width:20.60px;height:0.80px;background:#d3d3d3;"></div>
<div class="t" style="left:11.47px;top:319.52px;font-size:10.4px;color:#4f4f4f;">13</div>
<div class="a" style="left:7px;top:330.4px;width:20.60px;height:0.80px;background:#d3d3d3;"></div>
<div class="t" style="left:11.47px;top:334.82px;font-size:10.4px;color:#4f4f4f;">14</div>
<div class="a" style="left:7px;top:345.70000000000005px;width:20.60px;height:0.80px;background:#d3d3d3;"></div>
<div class="t" style="left:11.47px;top:350.12px;font-size:10.4px;color:#4f4f4f;">15</div>
<div class="a" style="left:7px;top:361.0px;width:20.60px;height:0.80px;background:#d3d3d3;"></div>
<div class="t" style="left:11.47px;top:365.42px;font-size:10.4px;color:#4f4f4f;">16</div>
<div class="a" style="left:7px;top:376.3px;width:20.60px;height:0.80px;background:#d3d3d3;"></div>
<div class="t" style="left:11.47px;top:380.72px;font-size:10.4px;color:#4f4f4f;">17</div>
<div class="a" style="left:7px;top:391.6px;width:20.60px;height:0.80px;background:#d3d3d3;"></div>
<div class="t" style="left:11.47px;top:396.02px;font-size:10.4px;color:#4f4f4f;">18</div>
<div class="a" style="left:7px;top:406.90000000000003px;width:20.60px;height:0.80px;background:#d3d3d3;"></div>
<div class="t" style="left:11.47px;top:411.32px;font-size:10.4px;color:#4f4f4f;">19</div>
<div class="a" style="left:7px;top:422.2px;width:20.60px;height:0.80px;background:#d3d3d3;"></div>
<div class="t" style="left:11.47px;top:426.62px;font-size:10.4px;color:#4f4f4f;">20</div>
<div class="a" style="left:7px;top:437.5px;width:20.60px;height:0.80px;background:#d3d3d3;"></div>
<div class="t" style="left:11.47px;top:441.92px;font-size:10.4px;color:#4f4f4f;">21</div>
<div class="a" style="left:7px;top:452.8px;width:20.60px;height:0.80px;background:#d3d3d3;"></div>
<div class="t" style="left:11.47px;top:457.22px;font-size:10.4px;color:#4f4f4f;">22</div>
<div class="a" style="left:7px;top:468.1px;width:20.60px;height:0.80px;background:#d3d3d3;"></div>
<div class="t" style="left:11.47px;top:472.52px;font-size:10.4px;color:#4f4f4f;">23</div>
<div class="a" style="left:7px;top:483.40000000000003px;width:20.60px;height:0.80px;background:#d3d3d3;"></div>
<div class="t" style="left:11.47px;top:487.82px;font-size:10.4px;color:#4f4f4f;">24</div>
<div class="a" style="left:7px;top:498.70000000000005px;width:20.60px;height:0.80px;background:#d3d3d3;"></div>
<div class="a" style="left:79.7px;top:147.3px;width:259.10px;height:15.30px;background:#4a72c0;"></div>
<div class="t" style="left:82.50px;top:150.77px;font-size:10.7px;color:#fff;font-weight:700;transform:scaleX(0.971);">Date</div>
<svg class="a" style="left:132.50px;top:150.50px" width="10.400" height="10.800" viewBox="0 0 10.400 10.800"><rect x=".3" y=".3" width="9.800" height="10.200" fill="#eef1f7" stroke="#b4bccb" stroke-width=".6"/><path d="M3.200 4.500h4L5.200 6.900z" fill="#6a6a6a"/></svg>
<div class="t" style="left:145.60px;top:150.77px;font-size:10.7px;color:#fff;font-weight:700;transform:scaleX(0.961);">Product</div>
<svg class="a" style="left:203.50px;top:150.50px" width="10.400" height="10.800" viewBox="0 0 10.400 10.800"><rect x=".3" y=".3" width="9.800" height="10.200" fill="#eef1f7" stroke="#b4bccb" stroke-width=".6"/><path d="M3.200 4.500h4L5.200 6.900z" fill="#6a6a6a"/></svg>
<div class="t" style="left:215.50px;top:150.77px;font-size:10.7px;color:#fff;font-weight:700;transform:scaleX(0.900);">Seller</div>
<svg class="a" style="left:267.00px;top:150.50px" width="10.400" height="10.800" viewBox="0 0 10.400 10.800"><rect x=".3" y=".3" width="9.800" height="10.200" fill="#eef1f7" stroke="#b4bccb" stroke-width=".6"/><path d="M3.200 4.500h4L5.200 6.900z" fill="#6a6a6a"/></svg>
<div class="t" style="left:279.50px;top:150.77px;font-size:10.7px;color:#fff;font-weight:700;transform:scaleX(0.870);">Sales</div>
<svg class="a" style="left:328.50px;top:150.50px" width="10.400" height="10.800" viewBox="0 0 10.400 10.800"><rect x=".3" y=".3" width="9.800" height="10.200" fill="#eef1f7" stroke="#b4bccb" stroke-width=".6"/><path d="M3.200 4.500h4L5.200 6.900z" fill="#6a6a6a"/></svg>
<div class="a" style="left:79.7px;top:162.6px;width:259.10px;height:15.30px;background:#dce3f1;"></div>
<div class="a" style="left:79.7px;top:177.3px;width:259.10px;height:0.80px;background:#c9d4ec;"></div>
<div class="t" style="left:83.40px;top:166.17px;font-size:10.5px;color:#1f1f1f;transform:scaleX(1.092);-webkit-text-stroke:0.220px #1f1f1f;">10/04/2018</div>
<div class="t" style="left:145.30px;top:166.17px;font-size:10.5px;color:#1f1f1f;-webkit-text-stroke:0.220px #1f1f1f;">Face Cream</div>
<div class="t" style="left:215.70px;top:166.17px;font-size:10.5px;color:#1f1f1f;transform:scaleX(1.025);-webkit-text-stroke:0.220px #1f1f1f;">Diana</div>
<div class="t" style="left:310.22px;top:166.17px;font-size:10.5px;color:#1f1f1f;-webkit-text-stroke:0.220px #1f1f1f;">63,71</div>
<div class="a" style="left:79.7px;top:192.6px;width:259.10px;height:0.80px;background:#c9d4ec;"></div>
<div class="t" style="left:83.40px;top:181.47px;font-size:10.5px;color:#1f1f1f;transform:scaleX(1.092);-webkit-text-stroke:0.220px #1f1f1f;">19/04/2018</div>
<div class="t" style="left:145.30px;top:181.47px;font-size:10.5px;color:#1f1f1f;-webkit-text-stroke:0.220px #1f1f1f;">Face Cream</div>
<div class="t" style="left:215.70px;top:181.47px;font-size:10.5px;color:#1f1f1f;transform:scaleX(1.030);-webkit-text-stroke:0.220px #1f1f1f;">Jamie</div>
<div class="t" style="left:310.22px;top:181.47px;font-size:10.5px;color:#1f1f1f;-webkit-text-stroke:0.220px #1f1f1f;">90,07</div>
<div class="a" style="left:79.7px;top:193.2px;width:259.10px;height:15.30px;background:#dce3f1;"></div>
<div class="a" style="left:79.7px;top:207.9px;width:259.10px;height:0.80px;background:#c9d4ec;"></div>
<div class="t" style="left:83.40px;top:196.77px;font-size:10.5px;color:#1f1f1f;transform:scaleX(1.092);-webkit-text-stroke:0.220px #1f1f1f;">16/04/2018</div>
<div class="t" style="left:145.30px;top:196.77px;font-size:10.5px;color:#1f1f1f;-webkit-text-stroke:0.220px #1f1f1f;">Face Cream</div>
<div class="t" style="left:215.70px;top:196.77px;font-size:10.5px;color:#1f1f1f;transform:scaleX(1.085);-webkit-text-stroke:0.220px #1f1f1f;">Michelle</div>
<div class="t" style="left:304.38px;top:196.77px;font-size:10.5px;color:#1f1f1f;-webkit-text-stroke:0.220px #1f1f1f;">143,95</div>
<div class="a" style="left:79.7px;top:223.20000000000002px;width:259.10px;height:0.80px;background:#c9d4ec;"></div>
<div class="t" style="left:83.40px;top:212.07px;font-size:10.5px;color:#1f1f1f;transform:scaleX(1.092);-webkit-text-stroke:0.220px #1f1f1f;">01/04/2018</div>
<div class="t" style="left:145.30px;top:212.07px;font-size:10.5px;color:#1f1f1f;-webkit-text-stroke:0.220px #1f1f1f;">Face Cream</div>
<div class="t" style="left:215.70px;top:212.07px;font-size:10.5px;color:#1f1f1f;transform:scaleX(1.040);-webkit-text-stroke:0.220px #1f1f1f;">Lisa</div>
<div class="t" style="left:304.38px;top:212.07px;font-size:10.5px;color:#1f1f1f;-webkit-text-stroke:0.220px #1f1f1f;">156,06</div>
<div class="a" style="left:79.7px;top:223.8px;width:259.10px;height:15.30px;background:#dce3f1;"></div>
<div class="a" style="left:79.7px;top:238.50000000000003px;width:259.10px;height:0.80px;background:#c9d4ec;"></div>
<div class="t" style="left:83.40px;top:227.37px;font-size:10.5px;color:#1f1f1f;transform:scaleX(1.092);-webkit-text-stroke:0.220px #1f1f1f;">16/04/2018</div>
<div class="t" style="left:145.30px;top:227.37px;font-size:10.5px;color:#1f1f1f;-webkit-text-stroke:0.220px #1f1f1f;">Hand Soap</div>
<div class="t" style="left:215.70px;top:227.37px;font-size:10.5px;color:#1f1f1f;transform:scaleX(1.040);-webkit-text-stroke:0.220px #1f1f1f;">Mark</div>
<div class="t" style="left:310.22px;top:227.37px;font-size:10.5px;color:#1f1f1f;-webkit-text-stroke:0.220px #1f1f1f;">59,30</div>
<div class="a" style="left:79.7px;top:253.8px;width:259.10px;height:0.80px;background:#c9d4ec;"></div>
<div class="t" style="left:83.40px;top:242.67px;font-size:10.5px;color:#1f1f1f;transform:scaleX(1.092);-webkit-text-stroke:0.220px #1f1f1f;">15/04/2018</div>
<div class="t" style="left:145.30px;top:242.67px;font-size:10.5px;color:#1f1f1f;-webkit-text-stroke:0.220px #1f1f1f;">Hand Soap</div>
<div class="t" style="left:215.70px;top:242.67px;font-size:10.5px;color:#1f1f1f;transform:scaleX(1.030);-webkit-text-stroke:0.220px #1f1f1f;">Jamie</div>
<div class="t" style="left:310.22px;top:242.67px;font-size:10.5px;color:#1f1f1f;-webkit-text-stroke:0.220px #1f1f1f;">65,06</div>
<div class="a" style="left:79.7px;top:254.4px;width:259.10px;height:15.30px;background:#dce3f1;"></div>
<div class="a" style="left:79.7px;top:269.1px;width:259.10px;height:0.80px;background:#c9d4ec;"></div>
<div class="t" style="left:83.40px;top:257.97px;font-size:10.5px;color:#1f1f1f;transform:scaleX(1.092);-webkit-text-stroke:0.220px #1f1f1f;">22/04/2018</div>
<div class="t" style="left:145.30px;top:257.97px;font-size:10.5px;color:#1f1f1f;-webkit-text-stroke:0.220px #1f1f1f;">Hand Soap</div>
<div class="t" style="left:215.70px;top:257.97px;font-size:10.5px;color:#1f1f1f;transform:scaleX(1.040);-webkit-text-stroke:0.220px #1f1f1f;">Lisa</div>
<div class="t" style="left:310.22px;top:257.97px;font-size:10.5px;color:#1f1f1f;-webkit-text-stroke:0.220px #1f1f1f;">74,05</div>
<div class="a" style="left:79.7px;top:284.4px;width:259.10px;height:0.80px;background:#c9d4ec;"></div>
<div class="t" style="left:83.40px;top:273.27px;font-size:10.5px;color:#1f1f1f;transform:scaleX(1.092);-webkit-text-stroke:0.220px #1f1f1f;">06/04/2018</div>
<div class="t" style="left:145.30px;top:273.27px;font-size:10.5px;color:#1f1f1f;-webkit-text-stroke:0.220px #1f1f1f;">Hand Soap</div>
<div class="t" style="left:215.70px;top:273.27px;font-size:10.5px;color:#1f1f1f;transform:scaleX(1.025);-webkit-text-stroke:0.220px #1f1f1f;">Diana</div>
<div class="t" style="left:310.22px;top:273.27px;font-size:10.5px;color:#1f1f1f;-webkit-text-stroke:0.220px #1f1f1f;">86,08</div>
<div class="a" style="left:79.7px;top:285.0px;width:259.10px;height:15.30px;background:#dce3f1;"></div>
<div class="a" style="left:79.7px;top:299.7px;width:259.10px;height:0.80px;background:#c9d4ec;"></div>
<div class="t" style="left:83.40px;top:288.57px;font-size:10.5px;color:#1f1f1f;transform:scaleX(1.092);-webkit-text-stroke:0.220px #1f1f1f;">24/04/2018</div>
<div class="t" style="left:145.30px;top:288.57px;font-size:10.5px;color:#1f1f1f;-webkit-text-stroke:0.220px #1f1f1f;">Sun Lotion</div>
<div class="t" style="left:215.70px;top:288.57px;font-size:10.5px;color:#1f1f1f;transform:scaleX(1.050);-webkit-text-stroke:0.220px #1f1f1f;">Richard</div>
<div class="t" style="left:304.38px;top:288.57px;font-size:10.5px;color:#1f1f1f;-webkit-text-stroke:0.220px #1f1f1f;">303,02</div>
<div class="a" style="left:79.7px;top:315.0px;width:259.10px;height:0.80px;background:#c9d4ec;"></div>
<div class="t" style="left:83.40px;top:303.87px;font-size:10.5px;color:#1f1f1f;transform:scaleX(1.092);-webkit-text-stroke:0.220px #1f1f1f;">15/04/2018</div>
<div class="t" style="left:145.30px;top:303.87px;font-size:10.5px;color:#1f1f1f;-webkit-text-stroke:0.220px #1f1f1f;">Sun Lotion</div>
<div class="t" style="left:215.70px;top:303.87px;font-size:10.5px;color:#1f1f1f;transform:scaleX(1.040);-webkit-text-stroke:0.220px #1f1f1f;">Lisa</div>
<div class="t" style="left:310.22px;top:303.87px;font-size:10.5px;color:#1f1f1f;-webkit-text-stroke:0.220px #1f1f1f;">347,1</div>
<div class="a" style="left:79.7px;top:315.6px;width:259.10px;height:15.30px;background:#dce3f1;"></div>
<div class="a" style="left:79.7px;top:330.29999999999995px;width:259.10px;height:0.80px;background:#c9d4ec;"></div>
<div class="t" style="left:83.40px;top:319.17px;font-size:10.5px;color:#1f1f1f;transform:scaleX(1.092);-webkit-text-stroke:0.220px #1f1f1f;">23/04/2018</div>
<div class="t" style="left:145.30px;top:319.17px;font-size:10.5px;color:#1f1f1f;-webkit-text-stroke:0.220px #1f1f1f;">Sun Lotion</div>
<div class="t" style="left:215.70px;top:319.17px;font-size:10.5px;color:#1f1f1f;transform:scaleX(1.040);-webkit-text-stroke:0.220px #1f1f1f;">Dennis</div>
<div class="t" style="left:304.38px;top:319.17px;font-size:10.5px;color:#1f1f1f;-webkit-text-stroke:0.220px #1f1f1f;">371,04</div>
<div class="a" style="left:79.7px;top:345.6px;width:259.10px;height:0.80px;background:#c9d4ec;"></div>
<div class="t" style="left:83.40px;top:334.47px;font-size:10.5px;color:#1f1f1f;transform:scaleX(1.092);-webkit-text-stroke:0.220px #1f1f1f;">16/04/2018</div>
<div class="t" style="left:145.30px;top:334.47px;font-size:10.5px;color:#1f1f1f;-webkit-text-stroke:0.220px #1f1f1f;">Sun Lotion</div>
<div class="t" style="left:215.70px;top:334.47px;font-size:10.5px;color:#1f1f1f;transform:scaleX(1.040);-webkit-text-stroke:0.220px #1f1f1f;">Mark</div>
<div class="t" style="left:304.38px;top:334.47px;font-size:10.5px;color:#1f1f1f;-webkit-text-stroke:0.220px #1f1f1f;">385,98</div>
<div class="a" style="left:79.4px;top:147.3px;width:0.80px;height:198.90px;background:#d0d9ee;"></div>
<div class="a" style="left:338.3px;top:147.3px;width:0.80px;height:198.90px;background:#d0d9ee;"></div>
<svg class="a" style="left:335.5px;top:342.20000000000005px;" width="4" height="4" viewBox="0 0 4 4"><path d="M3.600 .4v3.200H.4" fill="none" stroke="#3c5fa8" stroke-width="1.100"/></svg>
<div class="a" style="left:390px;top:147.3px;width:102.60px;height:15.30px;background:#e5803a;"></div>
<div class="t" style="left:392.80px;top:150.77px;font-size:10.7px;color:#fff;font-weight:700;transform:scaleX(0.876);">Seller</div>
<div class="t" style="left:444.20px;top:150.77px;font-size:10.7px;color:#fff;font-weight:700;transform:scaleX(0.830);">Sex</div>
<svg class="a" style="left:431.10px;top:150.50px" width="10.400" height="10.800" viewBox="0 0 10.400 10.800"><rect x=".3" y=".3" width="9.800" height="10.200" fill="#f6efea" stroke="#b4bccb" stroke-width=".6"/><path d="M3.200 4.500h4L5.200 6.900z" fill="#6a6a6a"/></svg>
<svg class="a" style="left:481.80px;top:150.50px" width="10.400" height="10.800" viewBox="0 0 10.400 10.800"><rect x=".3" y=".3" width="9.800" height="10.200" fill="#f6efea" stroke="#b4bccb" stroke-width=".6"/><path d="M3.200 4.500h4L5.200 6.900z" fill="#6a6a6a"/></svg>
<div class="a" style="left:390px;top:162.6px;width:102.60px;height:15.30px;background:#fae4d7;"></div>
<div class="a" style="left:390px;top:177.3px;width:102.60px;height:0.80px;background:#f4d2bb;"></div>
<div class="t" style="left:392.20px;top:166.17px;font-size:10.5px;color:#1f1f1f;transform:scaleX(1.025);-webkit-text-stroke:0.220px #1f1f1f;">Diana</div>
<div class="t" style="left:443.80px;top:166.17px;font-size:10.5px;color:#1f1f1f;-webkit-text-stroke:0.220px #1f1f1f;">Female</div>
<div class="a" style="left:390px;top:192.6px;width:102.60px;height:0.80px;background:#f4d2bb;"></div>
<div class="t" style="left:392.20px;top:181.47px;font-size:10.5px;color:#1f1f1f;transform:scaleX(1.030);-webkit-text-stroke:0.220px #1f1f1f;">Jamie</div>
<div class="t" style="left:443.80px;top:181.47px;font-size:10.5px;color:#1f1f1f;-webkit-text-stroke:0.220px #1f1f1f;">Female</div>
<div class="a" style="left:390px;top:193.2px;width:102.60px;height:15.30px;background:#fae4d7;"></div>
<div class="a" style="left:390px;top:207.9px;width:102.60px;height:0.80px;background:#f4d2bb;"></div>
<div class="t" style="left:392.20px;top:196.77px;font-size:10.5px;color:#1f1f1f;transform:scaleX(1.085);-webkit-text-stroke:0.220px #1f1f1f;">Michelle</div>
<div class="t" style="left:443.80px;top:196.77px;font-size:10.5px;color:#1f1f1f;-webkit-text-stroke:0.220px #1f1f1f;">Female</div>
<div class="a" style="left:390px;top:223.20000000000002px;width:102.60px;height:0.80px;background:#f4d2bb;"></div>
<div class="t" style="left:392.20px;top:212.07px;font-size:10.5px;color:#1f1f1f;transform:scaleX(1.040);-webkit-text-stroke:0.220px #1f1f1f;">Lisa</div>
<div class="t" style="left:443.80px;top:212.07px;font-size:10.5px;color:#1f1f1f;-webkit-text-stroke:0.220px #1f1f1f;">Female</div>
<div class="a" style="left:390px;top:223.8px;width:102.60px;height:15.30px;background:#fae4d7;"></div>
<div class="a" style="left:390px;top:238.50000000000003px;width:102.60px;height:0.80px;background:#f4d2bb;"></div>
<div class="t" style="left:392.20px;top:227.37px;font-size:10.5px;color:#1f1f1f;transform:scaleX(1.040);-webkit-text-stroke:0.220px #1f1f1f;">Mark</div>
<div class="t" style="left:443.80px;top:227.37px;font-size:10.5px;color:#1f1f1f;-webkit-text-stroke:0.220px #1f1f1f;">Male</div>
<div class="a" style="left:390px;top:253.8px;width:102.60px;height:0.80px;background:#f4d2bb;"></div>
<div class="t" style="left:392.20px;top:242.67px;font-size:10.5px;color:#1f1f1f;transform:scaleX(1.050);-webkit-text-stroke:0.220px #1f1f1f;">Richard</div>
<div class="t" style="left:443.80px;top:242.67px;font-size:10.5px;color:#1f1f1f;-webkit-text-stroke:0.220px #1f1f1f;">Male</div>
<div class="a" style="left:390px;top:254.4px;width:102.60px;height:15.30px;background:#fae4d7;"></div>
<div class="a" style="left:390px;top:269.1px;width:102.60px;height:0.80px;background:#f4d2bb;"></div>
<div class="t" style="left:392.20px;top:257.97px;font-size:10.5px;color:#1f1f1f;transform:scaleX(1.040);-webkit-text-stroke:0.220px #1f1f1f;">Dennis</div>
<div class="t" style="left:443.80px;top:257.97px;font-size:10.5px;color:#1f1f1f;-webkit-text-stroke:0.220px #1f1f1f;">Male</div>
<div class="a" style="left:389.7px;top:147.3px;width:0.80px;height:122.40px;background:#f5d9c6;"></div>
<div class="a" style="left:492.1px;top:147.3px;width:0.80px;height:122.40px;background:#f5d9c6;"></div>
<svg class="a" style="left:489px;top:265.70000000000005px;" width="4" height="4" viewBox="0 0 4 4"><path d="M3.600 .4v3.200H.4" fill="none" stroke="#3c5fa8" stroke-width="1.100"/></svg>
<div class="a" style="left:543px;top:146.0px;width:54.00px;height:17.50px;border:2px solid #76977f;"></div>
<div class="a" style="left:593px;top:160.2px;width:4.00px;height:4.00px;background:#fff;"></div>
<div class="a" style="left:594px;top:161.2px;width:3.00px;height:3.00px;background:#44705a;"></div>
<div class="a" style="left:569px;top:174.6px;width:348.30px;height:300.00px;background:#f0f0f0;border:1px solid #cf98a2;"></div>
<div class="a" style="left:570px;top:175.6px;width:346.30px;height:25.00px;background:#fff;"></div>
<div class="t" style="left:576.00px;top:184.82px;font-size:10.2px;color:#2a2a2a;transform:scaleX(0.901);">Create PivotTable</div>
<div class="t" style="left:858.50px;top:184.81px;font-size:9.2px;color:#444;">?</div>
<svg class="a" style="left:893px;top:184.5px;" width="9" height="9" viewBox="0 0 9 9"><path d="M.8 .8l7 7M7.800 .8l-7 7" stroke="#333" stroke-width=".9"/></svg>
<div class="t" style="left:576.00px;top:210.06px;font-size:9.3px;color:#1e1e1e;transform:scaleX(0.888);">Choose the data that you want to analyze</div>
<div class="a" style="left:732px;top:213.5px;width:178.50px;height:1.00px;background:#e7e7e7;"></div>
<svg class="a" style="left:583.5px;top:225.6px;" width="12" height="12" viewBox="0 0 12 12"><circle cx="6" cy="6" r="4.500" fill="#fff" stroke="#727272" stroke-width=".9"/></svg>
<div class="t" style="left:597.80px;top:228.26px;font-size:9.3px;color:#1e1e1e;transform:scaleX(0.900);"><u>S</u>elect a table or range</div>
<div class="t" style="left:614.20px;top:246.26px;font-size:9.3px;color:#1e1e1e;transform:scaleX(0.885);"><u>T</u>able/Range:</div>
<div class="a" style="left:671px;top:241px;width:221.50px;height:17.20px;background:#f6f6f6;border:1px solid #d6d6d6;"></div>
<div class="a" style="left:893.5px;top:241px;width:16.50px;height:17.20px;background:#f3f3f3;border:1px solid #dadada;"></div>
<svg class="a" style="left:583.5px;top:262.6px;" width="12" height="12" viewBox="0 0 12 12"><circle cx="6" cy="6" r="4.500" fill="#fff" stroke="#727272" stroke-width=".9"/></svg>
<div class="t" style="left:597.80px;top:265.26px;font-size:9.3px;color:#1e1e1e;transform:scaleX(0.885);"><u>U</u>se an external data source</div>
<div class="a" style="left:613.8px;top:278.5px;width:93.20px;height:18.70px;background:#e3e3e3;border:1px solid #c2c2c2;"></div>
<div class="t" style="left:622.00px;top:284.46px;font-size:9.3px;color:#8d8d8d;transform:scaleX(0.869);">Choose Connection...</div>
<div class="t" style="left:614.20px;top:303.26px;font-size:9.3px;color:#8d8d8d;transform:scaleX(0.859);">Connection name:</div>
<svg class="a" style="left:583.5px;top:315.6px;" width="12" height="12" viewBox="0 0 12 12"><circle cx="6" cy="6" r="4.500" fill="#fff" stroke="#727272" stroke-width=".9"/><circle cx="6" cy="6" r="2.900" fill="#222"/></svg>
<div class="t" style="left:597.80px;top:318.26px;font-size:9.3px;color:#1e1e1e;transform:scaleX(0.910);">Use this workbook's <u>D</u>ata Model</div>
<div class="t" style="left:576.00px;top:338.46px;font-size:9.3px;color:#1e1e1e;transform:scaleX(0.902);">Choose where you want the PivotTable report to be placed</div>
<div class="a" style="left:797px;top:342px;width:113.50px;height:1.00px;background:#e7e7e7;"></div>
<svg class="a" style="left:583.5px;top:354.2px;" width="12" height="12" viewBox="0 0 12 12"><circle cx="6" cy="6" r="4.500" fill="#fff" stroke="#727272" stroke-width=".9"/></svg>
<div class="t" style="left:597.80px;top:356.86px;font-size:9.3px;color:#1e1e1e;transform:scaleX(0.889);"><u>N</u>ew Worksheet</div>
<svg class="a" style="left:583.5px;top:370.7px;" width="12" height="12" viewBox="0 0 12 12"><circle cx="6" cy="6" r="4.500" fill="#fff" stroke="#727272" stroke-width=".9"/><circle cx="6" cy="6" r="2.900" fill="#222"/></svg>
<div class="a" style="left:596.6px;top:370.6px;width:71.90px;height:12.80px;border:1px dotted #555;"></div>
<div class="t" style="left:598.20px;top:373.36px;font-size:9.3px;color:#1e1e1e;transform:scaleX(0.869);"><u>E</u>xisting Worksheet</div>
<div class="t" style="left:614.20px;top:391.96px;font-size:9.3px;color:#1e1e1e;transform:scaleX(0.853);"><u>L</u>ocation:</div>
<div class="a" style="left:655.4px;top:387.2px;width:237.60px;height:16.40px;background:#fff;border:1px solid #c9c9c9;"></div>
<div class="t" style="left:659.00px;top:392.20px;font-size:9.0px;color:#1e1e1e;transform:scaleX(0.845);">Sheet1!$J$2</div>
<div class="a" style="left:893px;top:387.2px;width:17.20px;height:16.40px;background:#f4f4f4;border:1px solid #c4c4c4;"></div>
<svg class="a" style="left:897.5px;top:390.5px;" width="8" height="10" viewBox="0 0 8 10"><path d="M4 .8l3 3.600H5.100v2.600H2.900V4.400H1z" fill="#222"/><path d="M1 8.600h6" stroke="#222" stroke-width="1.200"/></svg>
<div class="t" style="left:576.00px;top:413.26px;font-size:9.3px;color:#1e1e1e;transform:scaleX(0.890);">Choose whether you want to analyze multiple tables</div>
<div class="a" style="left:771px;top:417px;width:139.50px;height:1.00px;background:#e7e7e7;"></div>
<div class="a" style="left:585.3px;top:430px;width:9.30px;height:9.40px;background:#fcfcfc;border:1px solid #d0d0d0;"></div>
<div class="t" style="left:597.80px;top:431.86px;font-size:9.3px;color:#9a9a9a;transform:scaleX(0.917);">Add this data to the Data Model</div>
<div class="a" style="left:758.4px;top:448.6px;width:71.20px;height:19.40px;background:#e4e4e4;border:1.600px solid #3c82c4;"></div>
<div class="a" style="left:760.6px;top:450.8px;width:66.80px;height:15.00px;border:1px dotted #9a9a9a;"></div>
<div class="t" style="left:788.50px;top:455.06px;font-size:9.3px;color:#1e1e1e;transform:scaleX(0.804);">OK</div>
<div class="a" style="left:838.4px;top:448.6px;width:71.80px;height:19.40px;background:#e2e2e2;border:1px solid #bcbcbc;"></div>
<div class="t" style="left:862.00px;top:455.06px;font-size:9.3px;color:#1e1e1e;transform:scaleX(0.857);">Cancel</div>
<svg class="a" style="left:908px;top:465.5px;" width="8" height="8" viewBox="0 0 8 8"><g fill="#b9b9b9"><rect x="6" y="0" width="1.300" height="1.300"/><rect x="4" y="2" width="1.300" height="1.300"/><rect x="6" y="2" width="1.300" height="1.300"/><rect x="2" y="4" width="1.300" height="1.300"/><rect x="4" y="4" width="1.300" height="1.300"/><rect x="6" y="4" width="1.300" height="1.300"/><rect x="0" y="6" width="1.300" height="1.300"/><rect x="2" y="6" width="1.300" height="1.300"/><rect x="4" y="6" width="1.300" height="1.300"/><rect x="6" y="6" width="1.300" height="1.300"/></g></svg>
<div class="a" style="left:115.40px;top:8.40px;width:32.40px;height:31.60px;border-radius:50%;background:#55268a;box-shadow:0.500px 1.200px 2px rgba(40,20,60,.45);clip-path:inset(0.400px -5px -5px -5px);"></div>
<div class="t" style="left:124.37px;top:12.60px;font-size:26px;color:#f3eef8;clip-path:inset(0 0 5.950px 0);">1</div>
<div class="a" style="left:14.40px;top:64.80px;width:31.80px;height:29.80px;border-radius:50%;background:#55268a;box-shadow:0.500px 1.200px 2px rgba(40,20,60,.45);"></div>
<div class="t" style="left:24.04px;top:69.91px;font-size:22.5px;color:#f3eef8;">2</div>
<div class="a" style="left:548.30px;top:303.90px;width:32.80px;height:30.00px;border-radius:50%;background:#55268a;box-shadow:0.500px 1.200px 2px rgba(40,20,60,.45);"></div>
<div class="t" style="left:558.25px;top:307.97px;font-size:23.2px;color:#f3eef8;">3</div>
<svg class="a" style="left:715px;top:225px;" width="210" height="105" viewBox="0 0 210 105"><defs><filter id="cs" x="-10%" y="-10%" width="120%" height="125%"><feGaussianBlur in="SourceAlpha" stdDeviation="1.400"/><feOffset dx="0" dy="1.500"/><feComponentTransfer><feFuncA type="linear" slope=".5"/></feComponentTransfer><feMerge><feMergeNode/><feMergeNode in="SourceGraphic"/></feMerge></filter></defs><g filter="url(#cs)" fill="#5a2b8e"><rect x="23.500" y="7.300" width="176.100" height="88.700" rx="44.350"/><path d="M29.500 66L8.900 94.300l33-8.500z"/></g></svg>
<div class="t" style="left:773.00px;top:253.16px;font-size:13.8px;color:#ece4f4;transform:scaleX(1.057);">Option available</div>
<div class="t" style="left:769.30px;top:270.36px;font-size:13.8px;color:#ece4f4;transform:scaleX(1.073);">once you make a</div>
<div class="t" style="left:788.20px;top:287.06px;font-size:13.8px;color:#ece4f4;transform:scaleX(1.064);">Data Model</div>
</div>
</body></html>
